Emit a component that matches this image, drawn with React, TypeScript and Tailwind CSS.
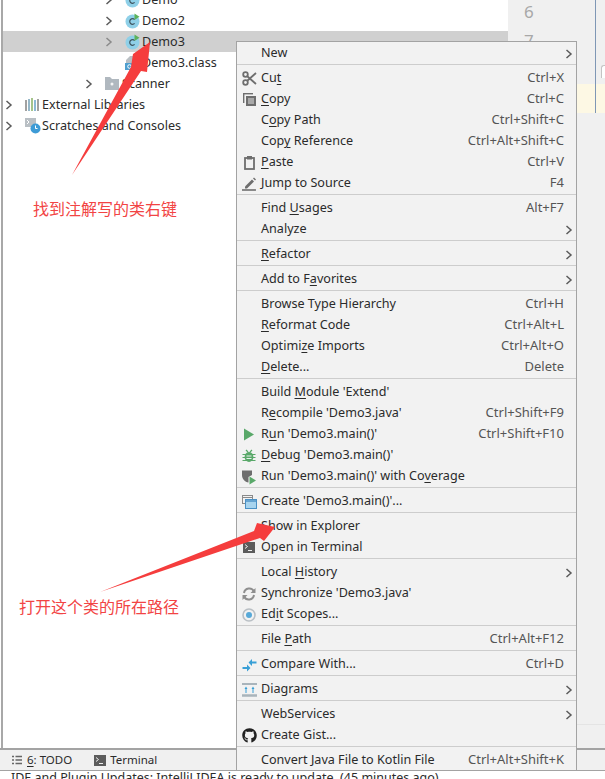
import { ReactNode } from 'react';
import { FaGithub } from 'react-icons/fa';

type MenuItem = { label: string; shortcut?: string; submenu?: boolean; icon?: ReactNode };

// "_" marks the mnemonic letter in a label
function Label({ text }: { text: string }) {
  const i = text.indexOf('_');
  if (i < 0) return <span>{text}</span>;
  return (
    <span>
      {text.slice(0, i)}
      <span className="underline underline-offset-2">{text[i + 1]}</span>
      {text.slice(i + 2)}
    </span>
  );
}

function ClassIcon() {
  return (
    <svg width="16" height="16" viewBox="0 0 16 16">
      <circle cx="7.5" cy="8.5" r="7" fill="#8fd0e8" />
      <path d="M9.6 6.6a2.8 2.8 0 1 0 0 3.8" fill="none" stroke="#3f5560" strokeWidth="1.2" />
      <path d="M9.5 0.5l5 3.2-5 3.3z" fill="#5cb15a" />
    </svg>
  );
}

function Chevron({ color = '#5a5a5a' }: { color?: string }) {
  return (
    <svg width="8" height="10" viewBox="0 0 8 10">
      <path d="M1.5 1l4.5 4-4.5 4" fill="none" stroke={color} strokeWidth="1.5" />
    </svg>
  );
}

function TerminalIcon() {
  return (
    <svg width="12" height="11" viewBox="0 0 12 11">
      <rect width="12" height="11" fill="#5c5c5c" />
      <path d="M2 2.5l2.5 2-2.5 2M5 8.5h4" fill="none" stroke="#eee" strokeWidth="1" />
    </svg>
  );
}

const icons = {
  cut: (
    <svg width="15" height="15" viewBox="0 0 15 15">
      <circle cx="3.5" cy="3.5" r="2.3" fill="none" stroke="#6e6e6e" strokeWidth="1.8" />
      <circle cx="3.5" cy="11.5" r="2.3" fill="none" stroke="#6e6e6e" strokeWidth="1.8" />
      <path d="M5 5l9 8M5 10l9-8" stroke="#6e6e6e" strokeWidth="1.8" />
    </svg>
  ),
  copy: (
    <svg width="13" height="13" viewBox="0 0 13 13">
      <path d="M0.7 0v10" stroke="#6e6e6e" strokeWidth="1.4" />
      <path d="M0 0.7h10" stroke="#6e6e6e" strokeWidth="1.4" />
      <rect x="3" y="3" width="10" height="10" fill="#6e6e6e" />
      <path d="M5 6h6M5 8h6M5 10h6" stroke="#f0f0f0" strokeWidth="0.9" />
    </svg>
  ),
  paste: (
    <svg width="11" height="14" viewBox="0 0 11 14">
      <rect x="1" y="2" width="9" height="11" fill="none" stroke="#6e6e6e" strokeWidth="1.8" />
      <rect x="3" y="0" width="5" height="3.5" fill="#6e6e6e" />
    </svg>
  ),
  jump: (
    <svg width="15" height="14" viewBox="0 0 15 14">
      <path d="M3 9.5L10 2.5l2 2L5 11.5H3z" fill="#6e6e6e" />
      <path d="M11 1.5l1-1 2 2-1 1z" fill="#6e6e6e" />
      <path d="M0 13h14" stroke="#6e6e6e" strokeWidth="1.6" />
    </svg>
  ),
  run: (
    <svg width="12" height="13" viewBox="0 0 12 13">
      <path d="M1 0.5l10 6-10 6z" fill="#59a869" />
    </svg>
  ),
  debug: (
    <svg width="14" height="14" viewBox="0 0 14 14">
      <ellipse cx="7" cy="8" rx="4.4" ry="5" fill="#59a869" />
      <path d="M4 1l2 2M10 1L8 3M0.5 5.5h13M0.5 8.5h13M0.5 11.5h13" stroke="#59a869" strokeWidth="1.2" />
      <path d="M4.5 7h5M4.5 9.5h5" stroke="#e8f2ea" strokeWidth="1" />
    </svg>
  ),
  coverage: (
    <svg width="16" height="16" viewBox="0 0 16 16">
      <path d="M1 1.5h10v4.5L7.5 8v5.5C4 13 1 10 1 6z" fill="#6e6e6e" />
      <path d="M8.5 7.5l6.5 4-6.5 4z" fill="#59a869" />
    </svg>
  ),
  create: (
    <svg width="15" height="14" viewBox="0 0 15 14">
      <rect x="0.5" y="0.5" width="10" height="8" fill="none" stroke="#8a8a8a" />
      <path d="M0.5 2.5h10" stroke="#8a8a8a" />
      <rect x="3.5" y="4.5" width="11" height="9" fill="#a8d4ee" stroke="#4a90c4" />
      <path d="M3.5 6h11" stroke="#4a90c4" strokeWidth="1.4" />
    </svg>
  ),
  sync: (
    <svg width="14" height="14" viewBox="0 0 14 14">
      <path d="M12 4.5A5.3 5.3 0 0 0 2 6" fill="none" stroke="#8e8e8e" strokeWidth="2" />
      <path d="M2 9.5A5.3 5.3 0 0 0 12 8" fill="none" stroke="#8e8e8e" strokeWidth="2" />
      <path d="M13.5 1v5h-5zM0.5 13V8h5z" fill="#8e8e8e" />
    </svg>
  ),
  scopes: (
    <svg width="14" height="14" viewBox="0 0 14 14">
      <circle cx="7" cy="7" r="6" fill="none" stroke="#b9bfc4" strokeWidth="1.6" />
      <circle cx="7" cy="7" r="3" fill="#58a9d8" />
    </svg>
  ),
  compare: (
    <svg width="15" height="14" viewBox="0 0 15 14">
      <path d="M14.5 3.5H10V1L6.5 4.5 10 8V5.5h4.5z" fill="#389fd6" />
      <path d="M0.5 9H5V6.5L8.5 10 5 13.5V11H0.5z" fill="#389fd6" />
    </svg>
  ),
  diagrams: (
    <svg width="15" height="14" viewBox="0 0 15 14">
      <path d="M0 0.8h15M0 12.5h15" stroke="#a9b4bb" strokeWidth="2.4" />
      <path d="M4 10V5M11 10V5" stroke="#389fd6" strokeWidth="1" />
      <path d="M2.5 6L4 3.5 5.5 6zM9.5 6L11 3.5 12.5 6z" fill="#389fd6" />
    </svg>
  ),
};

const groups: MenuItem[][] = [
  [{ label: 'New', submenu: true }],
  [
    { label: 'Cu_t', shortcut: 'Ctrl+X', icon: icons.cut },
    { label: '_Copy', shortcut: 'Ctrl+C', icon: icons.copy },
    { label: 'C_opy Path', shortcut: 'Ctrl+Shift+C' },
    { label: 'Cop_y Reference', shortcut: 'Ctrl+Alt+Shift+C' },
    { label: '_Paste', shortcut: 'Ctrl+V', icon: icons.paste },
    { label: 'Jump to Source', shortcut: 'F4', icon: icons.jump },
  ],
  [
    { label: 'Find _Usages', shortcut: 'Alt+F7' },
    { label: 'Analyze', submenu: true },
  ],
  [{ label: '_Refactor', submenu: true }],
  [{ label: 'Add to F_avorites', submenu: true }],
  [
    { label: 'Browse Type Hierarchy', shortcut: 'Ctrl+H' },
    { label: '_Reformat Code', shortcut: 'Ctrl+Alt+L' },
    { label: 'Optimi_ze Imports', shortcut: 'Ctrl+Alt+O' },
    { label: '_Delete...', shortcut: 'Delete' },
  ],
  [
    { label: "Build _Module 'Extend'" },
    { label: "R_ecompile 'Demo3.java'", shortcut: 'Ctrl+Shift+F9' },
    { label: "R_un 'Demo3.main()'", shortcut: 'Ctrl+Shift+F10', icon: icons.run },
    { label: "_Debug 'Demo3.main()'", icon: icons.debug },
    { label: "Run 'Demo3.main()' with Co_verage", icon: icons.coverage },
  ],
  [{ label: "Create 'Demo3.main()'...", icon: icons.create }],
  [
    { label: 'Show in Explorer' },
    { label: 'Open in Terminal', icon: <TerminalIcon /> },
  ],
  [
    { label: 'Local _History', submenu: true },
    { label: "Synchronize 'Demo3.java'", icon: icons.sync },
    { label: 'Ed_it Scopes...', icon: icons.scopes },
  ],
  [{ label: 'File _Path', shortcut: 'Ctrl+Alt+F12' }],
  [{ label: 'Compare With...', shortcut: 'Ctrl+D', icon: icons.compare }],
  [{ label: 'Diagrams', submenu: true, icon: icons.diagrams }],
  [
    { label: 'WebServices', submenu: true },
    { label: 'Create Gist...', icon: <FaGithub className="text-[15px] text-[#222]" /> },
  ],
  [{ label: 'Convert Java File to Kotlin File', shortcut: 'Ctrl+Alt+Shift+K' }],
];

function ContextMenu() {
  return (
    <div className="absolute left-[236px] top-[41px] w-[341px] h-[730px] border border-[#a3a3a3] bg-[#f2f2f2] text-[#2b2b2b] text-[12.6px]">
      {groups.map((group, g) => (
        <div key={g} className={g === 0 ? 'pt-px' : 'border-t border-[#cdcdcd] pt-[3px]'}>
          {group.map((item) => (
            <div key={item.label} className="relative flex items-center h-[21px] pl-[24px] pr-[12px]">
              {item.icon && (
                <span className="absolute left-[4px] top-0 bottom-0 w-[16px] flex items-center justify-center">
                  {item.icon}
                </span>
              )}
              <span className="-mt-[1.4px]">
                <Label text={item.label} />
              </span>
              {item.shortcut && <span className="ml-auto -mt-[1.4px] text-[13px] text-[#555]">{item.shortcut}</span>}
              {item.submenu && (
                <span className="absolute right-[3px] top-0 bottom-0 flex items-center">
                  <Chevron />
                </span>
              )}
            </div>
          ))}
        </div>
      ))}
    </div>
  );
}

function TreeRow({ indent, arrow, icon, label, selected }: { indent: string; arrow?: boolean; icon?: ReactNode; label: string; selected?: boolean }) {
  return (
    <div className={`flex items-center h-[21px] ${indent} ${selected ? 'bg-[#d0d0d0]' : ''}`}>
      <span className="w-[20px] flex items-center">{arrow && <Chevron color={selected ? '#8a8a8a' : '#5a5a5a'} />}</span>
      <span className="w-[17px] h-[16px] flex items-center">{icon}</span>
      <span className="text-[#2b2b2b]">{label}</span>
    </div>
  );
}

export default function App() {
  return (
    <div
      className="relative w-[605px] h-[779px] overflow-hidden bg-white flex flex-col text-[12.6px] leading-[21px]"
      style={{ fontFamily: '"Noto Sans", "Noto Sans CJK SC", sans-serif' }}
    >
      <div className="flex h-[748px] shrink-0">
        {/* Project tree */}
        <div className="w-[507px] shrink-0 ml-px border-l-2 border-[#a8a8a8] bg-white">
          <div className="-mt-[11px]">
            <TreeRow indent="pl-[102px]" arrow icon={<ClassIcon />} label="Demo" />
            <TreeRow indent="pl-[102px]" arrow icon={<ClassIcon />} label="Demo2" />
            <TreeRow indent="pl-[102px]" arrow selected icon={<ClassIcon />} label="Demo3" />
            <TreeRow
              indent="pl-[102px]"
              icon={
                <svg width="15" height="16" viewBox="0 0 15 16">
                  <path d="M5 1h9v8H1V5z" fill="#b9bfc4" />
                  <rect x="0" y="8" width="9" height="7" fill="#4f9fcf" />
                  <circle cx="4.5" cy="11.5" r="1.8" fill="none" stroke="#fff" />
                </svg>
              }
              label="Demo3.class"
            />
            <TreeRow
              indent="pl-[82px]"
              arrow
              icon={
                <svg width="15" height="13" viewBox="0 0 15 13">
                  <path d="M0 0h5l2 2h7v11H0z" fill="#b0b8bf" />
                  <circle cx="7" cy="7" r="1.5" fill="#f4f4f4" />
                </svg>
              }
              label="Scanner"
            />
            <TreeRow
              indent="pl-[2px]"
              arrow
              icon={
                <svg width="15" height="13" viewBox="0 0 15 13">
                  <path d="M1 2v11" stroke="#8a8a8a" strokeWidth="1.6" />
                  <path d="M4 1v12" stroke="#7ca6bb" strokeWidth="1.6" />
                  <path d="M7 0v13" stroke="#8fb56f" strokeWidth="1.6" />
                  <path d="M10 2v11" stroke="#6fa8c9" strokeWidth="1.6" />
                  <path d="M13 1v12" stroke="#8a8a8a" strokeWidth="1.6" />
                </svg>
              }
              label="External Libraries"
            />
            <TreeRow
              indent="pl-[2px]"
              arrow
              icon={
                <svg width="16" height="16" viewBox="0 0 16 16">
                  <rect x="0" y="0" width="11" height="9" fill="#b9bfc4" />
                  <path d="M2 2l2 2-2 2" fill="none" stroke="#fff" />
                  <circle cx="10.5" cy="10.5" r="5" fill="#3d9bd6" />
                  <path d="M10.5 7.5v3h2" fill="none" stroke="#fff" />
                </svg>
              }
              label="Scratches and Consoles"
            />
          </div>
        </div>

        {/* Editor gutter */}
        <div className="flex-1 bg-[#f0f0f0] flex flex-col">
          <div className="h-[84px] flex">
            <div className="w-[87px] overflow-hidden pl-[16px] text-[17px] leading-[29px] text-[#a8a8a8]">
              <div className="-mt-[3px]">6</div>
              <div>7</div>
            </div>
            <span className="w-px bg-[#7f97b5]" />
            <div className="flex-1 pt-[65px] pl-[5px]">
              <div className="h-[13px] rounded-tl-[3px] border-l border-t border-[#c4c4c4] bg-white" />
            </div>
          </div>
          <div className="h-[29px] bg-[#fdf8e4] flex pl-[87px]">
            <span className="w-px bg-[#7f97b5]" />
          </div>
          <div className="mt-auto mb-[23px] h-px bg-[#e4e4e4]" />
        </div>
      </div>

      {/* Bottom tool window bar */}
      <div className="h-[23px] shrink-0 border-t-2 border-b border-[#a3a3a3] bg-[#f0f0f0] flex items-center pl-[12px] text-[#2b2b2b] text-[11.5px] leading-none">
        <svg width="10" height="10" viewBox="0 0 10 10" className="mr-[5px]">
          <path d="M0 1.5h2M3.5 1.5H10M0 5h2M3.5 5H10M0 8.5h2M3.5 8.5H10" stroke="#666" strokeWidth="1.6" />
        </svg>
        <Label text="_6: TODO" />
        <span className="ml-[22px] mr-[4px] flex">
          <TerminalIcon />
        </span>
        <span>Terminal</span>
      </div>

      {/* Status line, cut off by the picture edge */}
      <div className="h-[8px] overflow-hidden bg-white pl-[11px] text-[#2b2b2b] text-[12.5px] leading-[13px] whitespace-nowrap">
        IDE and Plugin Updates: IntelliJ IDEA is ready to update. (45 minutes ago)
      </div>

      <ContextMenu />

      {/* Red annotations drawn over the screenshot */}
      <svg width="605" height="779" viewBox="0 0 605 779" className="absolute left-0 top-0 pointer-events-none">
        <path d="M72 175L131 67 133 54 150 42 147 72 141 71z" fill="#f53d3d" />
        <path d="M100 592L254 531 257 523 275 527 264 541 260 538z" fill="#f53d3d" />
      </svg>
      <div className="absolute left-[33px] top-[197px] text-[16px] leading-[24px] text-[#f24444]">找到注解写的类右键</div>
      <div className="absolute left-[19px] top-[595px] text-[16px] leading-[24px] text-[#f24444]">打开这个类的所在路径</div>
    </div>
  );
}
